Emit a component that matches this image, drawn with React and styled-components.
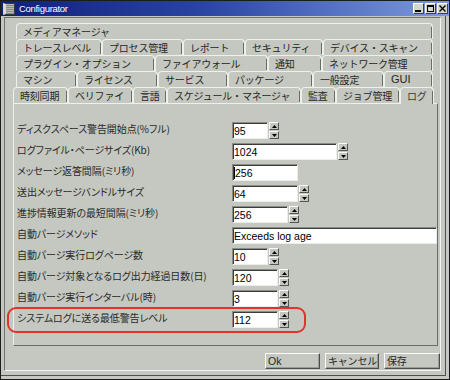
import React from 'react';
import styled, { createGlobalStyle } from 'styled-components';

const BG = '#c4c8c0';
const LIGHT = '#eef0ec';
const SHADOW = '#6a6c68';
const JP = `"Noto Sans CJK JP", "Liberation Sans", sans-serif`;
const LATIN = `"Liberation Sans", "Noto Sans CJK JP", sans-serif`;

const Global = createGlobalStyle`
  html, body { margin: 0; padding: 0; background: ${BG}; }
  body { width: 450px; height: 380px; overflow: hidden; font-family: ${JP}; }
`;

const Window = styled.div`
  box-sizing: border-box;
  width: 450px;
  height: 380px;
  border: 1px solid #1c1c1c;
  background: ${BG};
  display: flex;
  flex-direction: column;
`;

const TitleBar = styled.div`
  height: 15px;
  flex: none;
  display: flex;
  align-items: center;
  background: linear-gradient(90deg, #10207a 0%, #2a44a2 45%, #7c9ade 100%);
`;

const MenuIcon = styled.div`
  box-sizing: border-box;
  width: 12px;
  height: 12px;
  margin-left: 2px;
  border: 1px solid #3a3a3a;
  background: repeating-linear-gradient(180deg, #b4b6b2 0 1px, #8c8e8a 1px 2px);
  border-left: 3px solid #d8dad6;
`;

const Title = styled.span`
  margin-left: 4px;
  color: #fff;
  font-family: ${LATIN};
  font-size: 9.5px;
  letter-spacing: -0.3px;
  line-height: 15px;
  flex: 1;
`;

const WinButtons = styled.div`
  display: flex;
  gap: 1px;
  margin-right: 1px;
`;

const WinButton = styled.div`
  box-sizing: border-box;
  width: 11px;
  height: 11px;
  background: #d4d6d2;
  border-top: 1px solid #fff;
  border-left: 1px solid #fff;
  border-right: 1px solid #404040;
  border-bottom: 1px solid #404040;
  display: flex;
  align-items: center;
  justify-content: center;
`;

const Frame = styled.div`
  flex: 1;
  display: flex;
  flex-direction: column;
  margin: 0 3px 3px 0;
  border-right: 1px solid #505050;
  border-bottom: 1px solid #505050;
`;

const Client = styled.div`
  flex: 1;
  display: flex;
  flex-direction: column;
  margin: 1px 4px 4px 3px;
  padding-top: 5px;
  border-top: 1px solid #707270;
  border-left: 1px solid #707270;
  border-right: 1px solid #f4f4f2;
  border-bottom: 1px solid #f4f4f2;
`;

const TabRow = styled.div`
  display: flex;
  align-items: flex-start;
  height: 16px;
  margin-left: ${p => p.$indent}px;
`;

const Tab = styled.div`
  position: relative;
  z-index: ${p => (p.$sel ? 2 : 0)};
  box-sizing: border-box;
  flex: none;
  width: ${p => p.$w}px;
  height: ${p => (p.$sel ? 17 : 16)}px;
  margin-bottom: ${p => (p.$sel ? -1 : 0)}px;
  border: 1px solid ${LIGHT};
  border-bottom: none;
  border-radius: 4px 4px 0 0;
  padding-left: 6px;
  background: ${BG};
  color: ${p => (p.$sel ? '#3a3a3a' : '#262626')};
  font-family: ${p => (p.$latin ? LATIN : JP)};
  font-size: ${p => (p.$latin ? 11 : 10)}px;
  letter-spacing: ${p => (p.$latin ? 0 : -0.2)}px;
  line-height: 15px;
  white-space: nowrap;
  overflow: hidden;
  &::after {
    content: '';
    position: absolute;
    right: 0;
    top: 3px;
    bottom: ${p => (p.$sel ? 0 : 1)}px;
    width: 1px;
    background: ${SHADOW};
  }
`;

const Panel = styled.div`
  position: relative;
  box-sizing: border-box;
  width: 425px;
  height: 243px;
  margin-left: 8px;
  padding: 16px 0 0 3px;
  border-top: 1px solid ${LIGHT};
  border-left: 1px solid ${LIGHT};
  border-right: 1px solid ${SHADOW};
  border-bottom: 1px solid ${SHADOW};
`;

const FormGrid = styled.div`
  display: grid;
  grid-template-columns: 215px 1fr;
  grid-auto-rows: 21px;
  align-items: center;
`;

const Label = styled.div`
  font-size: 10px;
  line-height: 14px;
  letter-spacing: -0.1px;
  color: #2a2a2a;
  font-feature-settings: "palt";
  white-space: nowrap;
  margin-top: -3px;
`;

const Field = styled.div`
  display: flex;
  align-items: center;
`;

const Input = styled.div`
  box-sizing: border-box;
  width: ${p => p.$w}px;
  height: 17px;
  background: #fff;
  border-top: 1px solid #8a8c88;
  border-left: 1px solid #8a8c88;
  border-right: 1px solid #eceeea;
  border-bottom: 1px solid #eceeea;
  box-shadow: inset 1px 1px 0 #3c3c3c;
  padding-left: 1px;
  display: flex;
  align-items: center;
  font-family: ${LATIN};
  font-size: 10.5px;
  color: #000;
  white-space: nowrap;
  overflow: hidden;
`;

const Caret = styled.span`
  display: inline-block;
  width: 1px;
  height: 12px;
  background: #000;
`;

const Spinner = styled.div`
  display: flex;
  flex-direction: column;
  gap: 1px;
  margin-left: 1px;
`;

const SpinButton = styled.div`
  box-sizing: border-box;
  width: 10px;
  height: 8px;
  background: ${BG};
  border-top: 1px solid #fafafa;
  border-left: 1px solid #fafafa;
  border-right: 1px solid #555;
  border-bottom: 1px solid #555;
  display: flex;
  align-items: center;
  justify-content: center;
`;

const Highlight = styled.div`
  position: absolute;
  left: -7px;
  top: 203px;
  width: 299px;
  height: 26px;
  box-sizing: border-box;
  border: 2px solid #e3322c;
  border-radius: 9px;
  pointer-events: none;
`;

const ButtonRow = styled.div`
  display: flex;
  justify-content: flex-end;
  gap: 5px;
  margin-top: 7px;
`;

const PushButton = styled.div`
  box-sizing: border-box;
  width: ${p => p.$w}px;
  height: 16px;
  border-top: 1px solid #fafafa;
  border-left: 1px solid #fafafa;
  border-right: 1px solid #4e4e4e;
  border-bottom: 1px solid #4e4e4e;
  box-shadow: inset -1px -1px 0 #9a9c98;
  padding-left: 2px;
  font-family: ${p => (p.$latin ? LATIN : JP)};
  font-size: ${p => (p.$latin ? 10.5 : 10)}px;
  letter-spacing: ${p => (p.$latin ? 0 : -0.2)}px;
  line-height: 14px;
  color: #262626;
  white-space: nowrap;
  overflow: hidden;
`;

const tabRows = [
  { indent: 11, tabs: [['メディアマネージャ', 417]] },
  {
    indent: 11,
    tabs: [['トレースレベル', 86], ['プロセス管理', 81], ['レポート', 62], ['セキュリティ', 78], ['デバイス・スキャン', 110]],
  },
  {
    indent: 11,
    tabs: [['プラグイン・オプション', 139], ['ファイアウォール', 113], ['通知', 54], ['ネットワーク管理', 111]],
  },
  {
    indent: 11,
    tabs: [['マシン', 61], ['ライセンス', 81], ['サービス', 70], ['パッケージ', 85], ['一般設定', 71], ['GUI', 49, false, true]],
  },
  {
    indent: 8,
    tabs: [
      ['時刻同期', 55], ['ベリファイ', 65], ['言語', 34], ['スケジュール・マネージャ', 134],
      ['監査', 35], ['ジョブ管理', 64], ['ログ', 34, true],
    ],
  },
];

const fields = [
  { label: 'ディスクスペース警告開始点(%フル)', value: '95', w: 36, spin: true },
  { label: 'ログファイル・ページサイズ(Kb)', value: '1024', w: 105, spin: true },
  { label: 'メッセージ返答間隔(ミリ秒)', value: '256', w: 66, caret: true },
  { label: '送出メッセージバンドルサイズ', value: '64', w: 66, spin: true },
  { label: '進捗情報更新の最短間隔(ミリ秒)', value: '256', w: 56, spin: true },
  { label: '自動パージメソッド', value: 'Exceeds log age', w: 205 },
  { label: '自動パージ実行ログページ数', value: '10', w: 36, spin: true },
  { label: '自動パージ対象となるログ出力経過日数(日)', value: '120', w: 46, spin: true },
  { label: '自動パージ実行インターバル(時)', value: '3', w: 46, spin: true },
  { label: 'システムログに送る最低警告レベル', value: '112', w: 46, spin: true },
];

const Arrow = ({ up }) => (
  <svg width="5" height="3" viewBox="0 0 5 3">
    <polygon points={up ? '2.5,0 5,3 0,3' : '0,0 5,0 2.5,3'} fill="#000" />
  </svg>
);

export default function App() {
  return (
    <>
      <Global />
      <Window>
        <TitleBar>
          <MenuIcon />
          <Title>Configurator</Title>
          <WinButtons>
            <WinButton>
              <svg width="7" height="7" viewBox="0 0 7 7">
                <rect x="0" y="5" width="6" height="2" fill="#000" />
              </svg>
            </WinButton>
            <WinButton>
              <svg width="7" height="7" viewBox="0 0 7 7">
                <rect x="0.5" y="0.5" width="6" height="6" fill="none" stroke="#000" />
                <rect x="0" y="0" width="7" height="2" fill="#000" />
              </svg>
            </WinButton>
            <WinButton>
              <svg width="7" height="7" viewBox="0 0 7 7">
                <path d="M0.5 0.5 L6.5 6.5 M6.5 0.5 L0.5 6.5" stroke="#000" strokeWidth="1.4" />
              </svg>
            </WinButton>
          </WinButtons>
        </TitleBar>
        <Frame>
          <Client>
            {tabRows.map((row, i) => (
              <TabRow key={i} $indent={row.indent}>
                {row.tabs.map(([name, w, sel, latin]) => (
                  <Tab key={name} $w={w} $sel={sel} $latin={latin}>{name}</Tab>
                ))}
              </TabRow>
            ))}
            <Panel>
              <FormGrid>
                {fields.map(f => (
                  <React.Fragment key={f.label}>
                    <Label>{f.label}</Label>
                    <Field>
                      <Input $w={f.w}>
                        {f.caret && <Caret />}
                        {f.value}
                      </Input>
                      {f.spin && (
                        <Spinner>
                          <SpinButton><Arrow up /></SpinButton>
                          <SpinButton><Arrow /></SpinButton>
                        </Spinner>
                      )}
                    </Field>
                  </React.Fragment>
                ))}
              </FormGrid>
              <Highlight />
            </Panel>
            <ButtonRow>
              <PushButton $w={55} $latin>Ok</PushButton>
              <PushButton $w={54}>キャンセル</PushButton>
              <PushButton $w={56}>保存</PushButton>
            </ButtonRow>
          </Client>
        </Frame>
      </Window>
    </>
  );
}
